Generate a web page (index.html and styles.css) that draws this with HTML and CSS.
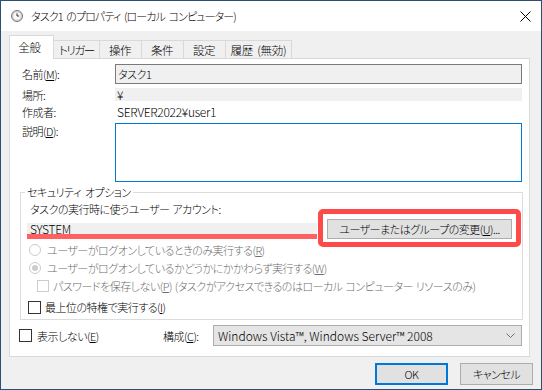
FILE: index.html
```html
<!DOCTYPE html>
<html lang="ja">
<head>
  <meta charset="UTF-8" />
  <title>タスク1 のプロパティ</title>
  <link rel="stylesheet" href="styles.css">
</head>
<body>
  <div class="window">
    <div class="titlebar">
      <svg class="app-icon" width="12" height="12" viewBox="0 0 12 12">
        <circle cx="6" cy="6" r="5.5" fill="#d4d4d4" stroke="#7b7b7b" stroke-width="1"/>
        <circle cx="6" cy="6" r="3.6" fill="#fafafa"/>
        <path d="M6 3.3V6h2.2" fill="none" stroke="#333" stroke-width="1"/>
      </svg>
      <span class="title">タスク1 のプロパティ (ローカル コンピューター)</span>
      <svg class="close" width="11" height="11" viewBox="0 0 11 11">
        <path d="M0.5 0.5L10.5 10.5M10.5 0.5L0.5 10.5" stroke="#000" stroke-width="1"/>
      </svg>
    </div>

    <div class="tabs">
      <div class="tab active">全般</div>
      <div class="tab kana">トリガー</div>
      <div class="tab">操作</div>
      <div class="tab">条件</div>
      <div class="tab">設定</div>
      <div class="tab">履歴 (無効)</div>
    </div>

    <div class="panel">
      <div class="fields">
        <div class="label">名前(<u>M</u>):</div>
        <div class="readonly-box">タスク1</div>
        <div class="label">場所:</div>
        <div class="static-bar latin">¥</div>
        <div class="label">作成者:</div>
        <div class="static-text latin">SERVER2022¥user1</div>
        <div class="label top">説明(<u>D</u>):</div>
        <div class="textbox"></div>
      </div>

      <fieldset class="group">
        <legend>セキュリティ オプション</legend>
        <div class="account-label">タスクの実行時に使うユーザー アカウント:</div>
        <div class="account-row">
          <div class="account">
            <div class="account-name latin">SYSTEM</div>
            <div class="account-mark"></div>
          </div>
          <div class="change-wrap">
            <button class="btn change">ユーザーまたはグループの変更(<u>U</u>)...</button>
            <div class="highlight"></div>
          </div>
        </div>
        <div class="option disabled">
          <span class="radio"></span>
          <span>ユーザーがログオンしているときのみ実行する(<u>R</u>)</span>
        </div>
        <div class="option disabled">
          <span class="radio checked"></span>
          <span>ユーザーがログオンしているかどうかにかかわらず実行する(<u>W</u>)</span>
        </div>
        <div class="option disabled sub">
          <span class="check"></span>
          <span>パスワードを保存しない(<u>P</u>) (タスクがアクセスできるのはローカル コンピューター リソースのみ)</span>
        </div>
        <div class="option main">
          <span class="check"></span>
          <span>最上位の特権で実行する(<u>I</u>)</span>
        </div>
      </fieldset>

      <div class="bottom-row">
        <div class="hide-opt">
          <span class="check"></span>
          <span>表示しない(<u>E</u>)</span>
        </div>
        <span class="config-label">構成(<u>C</u>):</span>
        <div class="select">
          <span class="latin wide">Windows Vista™, Windows Server™ 2008</span>
          <svg width="9" height="5" viewBox="0 0 9 5">
            <path d="M0.5 0.5L4.5 4.5L8.5 0.5" fill="none" stroke="#707070" stroke-width="1"/>
          </svg>
        </div>
      </div>
    </div>

    <div class="actions">
      <button class="btn dialog default">OK</button>
      <button class="btn dialog">キャンセル</button>
    </div>
  </div>
</body>
</html>
```

FILE: styles.css
```css
* {
  box-sizing: border-box;
}
body {
  margin: 0;
  font-family: "Noto Sans CJK JP", "Noto Sans", sans-serif;
  font-size: 11px;
  font-weight: 300;
  line-height: 14px;
  letter-spacing: -0.5px;
  word-spacing: 1px;
  font-feature-settings: "palt";
  color: #000;
  white-space: nowrap;
}
u {
  text-decoration: underline;
  text-underline-offset: 1px;
}
.latin {
  font-size: 12px;
  letter-spacing: -0.3px;
  word-spacing: 0;
}
.latin.wide {
  letter-spacing: 0;
}
.window {
  width: 542px;
  height: 390px;
  border: 1px solid #2b5074;
  background: #f0f0f0;
  display: flex;
  flex-direction: column;
  overflow: hidden;
}
.titlebar {
  height: 30px;
  flex: none;
  background: #fff;
  display: flex;
  align-items: center;
  padding: 0 10px;
}
.app-icon {
  margin-right: 8px;
}
.title {
  flex: 1;
  letter-spacing: -0.9px;
  word-spacing: 2px;
}
.close {
  margin-top: 1px;
}
.tabs {
  height: 27px;
  flex: none;
  display: flex;
  align-items: flex-end;
  padding-left: 8px;
  font-size: 11.5px;
  letter-spacing: -0.3px;
  word-spacing: 2px;
}
.tab {
  height: 18px;
  min-width: 43px;
  padding: 0 5px;
  border: 1px solid #d9d9d9;
  border-bottom: none;
  margin-left: -1px;
  background: #f0f0f0;
  display: flex;
  align-items: center;
  justify-content: center;
}
.tab.kana {
  letter-spacing: -1.5px;
}
.tab.active {
  height: 24px;
  min-width: 45px;
  margin-left: 0;
  margin-bottom: -1px;
  padding: 0 4px 1px 0;
  background: #fff;
  position: relative;
  z-index: 1;
}
.panel {
  height: 299px;
  flex: none;
  margin: 0 11px 0 8px;
  padding-top: 5px;
  border: 1px solid #d9d9d9;
  background: #fff;
}
.fields {
  display: grid;
  grid-template-columns: 93px 1fr;
  grid-template-rows: 20px 13px 14px 59px;
  row-gap: 4px;
  margin: 0 7px 0 12px;
}
.label {
  align-self: center;
}
.label.top {
  align-self: start;
  padding-top: 1px;
}
.readonly-box {
  border: 1px solid #7a7a7a;
  background: #f0f0f0;
  padding-left: 2px;
  display: flex;
  align-items: center;
}
.static-bar {
  background: #f0f0f0;
  padding-left: 2px;
  line-height: 13px;
}
.static-text {
  padding-left: 2px;
}
.textbox {
  border: 1px solid #0078d7;
  background: #fff;
}
.group {
  margin: 3px 6px 0 10px;
  padding: 0 0 3px 6px;
  min-width: 0;
  border: 1px solid #dcdcdc;
}
.group legend {
  padding: 0 2px;
  margin-left: -2px;
  word-spacing: 2px;
}
.account-label {
  margin-top: 3px;
  padding-left: 3px;
}
.account-row {
  display: flex;
  align-items: flex-end;
  height: 20px;
  margin-top: 3px;
}
.account {
  width: 290px;
}
.account-name {
  height: 11px;
  line-height: 11px;
  background: #f0f0f0;
  padding-left: 3px;
}
.account-mark {
  height: 5px;
  background: #ff6161;
}
.change-wrap {
  position: relative;
  margin-left: 10px;
}
.btn {
  font: inherit;
  letter-spacing: inherit;
  font-feature-settings: "palt";
  color: #000;
  background: #e1e1e1;
  border: 1px solid #adadad;
  padding: 0;
  margin: 0;
}
.change {
  width: 185px;
  height: 20px;
  display: block;
}
.highlight {
  position: absolute;
  top: -10px;
  left: -9px;
  right: -9px;
  bottom: -8px;
  border: 5px solid #ff4a4a;
  border-radius: 5px;
  pointer-events: none;
}
.option {
  display: flex;
  align-items: center;
  height: 18px;
  margin-top: 2px;
}
.option.disabled {
  color: #6d6d6d;
}
.radio {
  width: 12px;
  height: 12px;
  margin: 0 6px 0 2px;
  border: 1px solid #cccccc;
  border-radius: 50%;
  background: #fff;
  display: flex;
  align-items: center;
  justify-content: center;
}
.radio.checked::after {
  content: "";
  width: 6px;
  height: 6px;
  border-radius: 50%;
  background: #cccccc;
}
.option.disabled + .option.disabled {
  margin-top: 0;
}
.option.sub {
  margin-top: 4px;
}
.option.sub .check {
  margin: 0 4px 0 10px;
  width: 12px;
  height: 12px;
  border-color: #cccccc;
}
.option.main {
  margin-top: 3px;
}
.check {
  width: 13px;
  height: 13px;
  border: 1px solid #333;
  background: #fff;
  margin: 0 4px 0 1px;
  flex: none;
}
.bottom-row {
  display: flex;
  align-items: center;
  height: 21px;
  margin: 5px 7px 0 9px;
}
.hide-opt {
  width: 144px;
  display: flex;
  align-items: center;
}
.hide-opt .check {
  margin: 0 5px 0 0;
}
.select {
  margin-left: auto;
  width: 309px;
  height: 21px;
  border: 1px solid #adadad;
  background: #e5e5e5;
  display: flex;
  align-items: center;
  justify-content: space-between;
  padding: 0 6px 0 4px;
}
.actions {
  display: flex;
  justify-content: flex-end;
  gap: 12px;
  margin: 6px 8px 0 0;
}
.dialog {
  width: 73px;
  height: 22px;
}
.dialog.default {
  border: 2px solid #0078d7;
}
```
